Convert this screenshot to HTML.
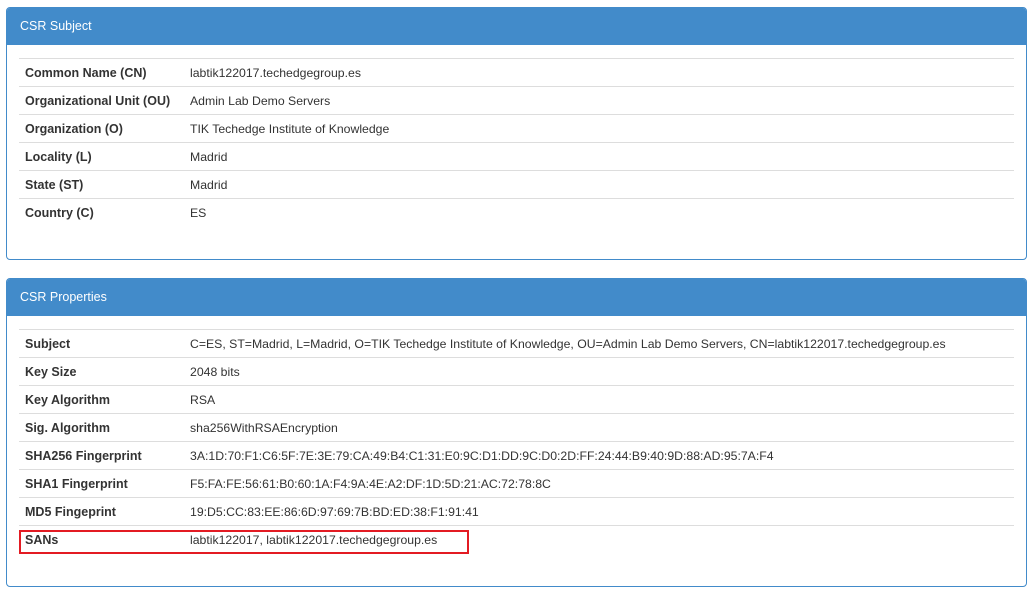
<!DOCTYPE html>
<html><head><style>
body{margin:0;background:#fff;font-family:"Liberation Sans",sans-serif;font-size:12.5px;color:#333}
.panel{position:absolute;left:6px;width:1019px;border:1px solid #428bca;border-radius:4px;background:#fff}
.hd{background:#428bca;color:#fff;height:37px;line-height:37px;padding-left:13px;font-size:12.5px;border-radius:3px 3px 0 0}
table{position:absolute;left:12px;width:995px;border-collapse:collapse}
td{height:27px;border-top:1px solid #ddd;padding:0 0 0 6px;vertical-align:middle;font-size:12.25px}
td.l{font-weight:bold;width:159px;font-size:12.5px}
.red{position:absolute;left:19px;top:530px;width:446px;height:20px;border:2px solid #e31b23}
</style></head><body>
<div class="panel" style="top:7px;height:251px"><div class="hd">CSR Subject</div>
<table style="top:50px">
<tr><td class="l">Common Name (CN)</td><td>labtik122017.techedgegroup.es</td></tr>
<tr><td class="l">Organizational Unit (OU)</td><td>Admin Lab Demo Servers</td></tr>
<tr><td class="l">Organization (O)</td><td>TIK Techedge Institute of Knowledge</td></tr>
<tr><td class="l">Locality (L)</td><td>Madrid</td></tr>
<tr><td class="l">State (ST)</td><td>Madrid</td></tr>
<tr><td class="l">Country (C)</td><td>ES</td></tr>
</table></div>
<div class="panel" style="top:278px;height:307px"><div class="hd">CSR Properties</div>
<table style="top:50px">
<tr><td class="l">Subject</td><td>C=ES, ST=Madrid, L=Madrid, O=TIK Techedge Institute of Knowledge, OU=Admin Lab Demo Servers, CN=labtik122017.techedgegroup.es</td></tr>
<tr><td class="l">Key Size</td><td>2048 bits</td></tr>
<tr><td class="l">Key Algorithm</td><td>RSA</td></tr>
<tr><td class="l">Sig. Algorithm</td><td>sha256WithRSAEncryption</td></tr>
<tr><td class="l">SHA256 Fingerprint</td><td>3A:1D:70:F1:C6:5F:7E:3E:79:CA:49:B4:C1:31:E0:9C:D1:DD:9C:D0:2D:FF:24:44:B9:40:9D:88:AD:95:7A:F4</td></tr>
<tr><td class="l">SHA1 Fingerprint</td><td>F5:FA:FE:56:61:B0:60:1A:F4:9A:4E:A2:DF:1D:5D:21:AC:72:78:8C</td></tr>
<tr><td class="l">MD5 Fingeprint</td><td>19:D5:CC:83:EE:86:6D:97:69:7B:BD:ED:38:F1:91:41</td></tr>
<tr><td class="l">SANs</td><td>labtik122017, labtik122017.techedgegroup.es</td></tr>
</table></div>
<div class="red"></div>
</body></html>
